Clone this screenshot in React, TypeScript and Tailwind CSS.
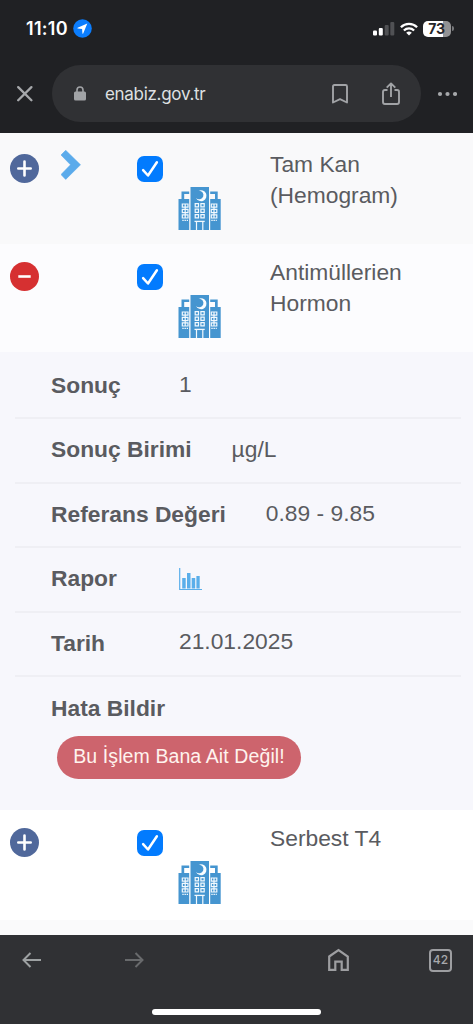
import { clsx } from "clsx";
import type { ReactNode } from "react";

type TestRowProps = {
  name: ReactNode;
  open?: boolean;
  arrow?: boolean;
  className?: string;
};

const details: { label: string; value: ReactNode; className?: string }[] = [
  { label: "Sonuç", value: "1", className: "pb-[2px]" },
  { label: "Sonuç Birimi", value: "µg/L" },
  { label: "Referans Değeri", value: "0.89 - 9.85", className: "pb-px" },
  { label: "Rapor", value: <ChartIcon /> },
  { label: "Tarih", value: "21.01.2025", className: "pb-[3px]" },
];

function ChartIcon() {
  return (
    <svg width="24" height="24" viewBox="0 0 24 24" className="mt-[2px] text-[#5aaeea]">
      <path d="M.7 1v21.500h22.300" fill="none" stroke="currentColor" strokeWidth="1.200" />
      <path d="M3.200 11h3.500v10.500h-3.500zM8 6h3.500v15.500h-3.500zM12.700 11h3.500v10.500h-3.500zM17.400 9h3.300v12.500h-3.300z" fill="currentColor" />
    </svg>
  );
}

function HospitalIcon() {
  return (
    <svg width="43" height="43" viewBox="0 0 43 43" className="-ml-[0.500px]">
      <g fill="#4595d0">
        <path d="M12.500 0h18.500v43h-18.500z" />
        <path d="M.500 12h10.700v31h-10.700zM32.200 12h10.500v31h-10.500z" />
        <path d="M3.500 4.500h7.700v2.400h-5v5.600h-2.700zM32.200 4.500h7.500v8h-2.700v-5.600h-4.800z" />
      </g>
      <path d="M20.500 3.800a5.500 5.500 0 1 1-2.500 7.200 4.300 4.300 0 1 0 2.500-7.200z" fill="#fbfdff" />
      <g fill="none" stroke="#f2f9fe" strokeWidth="1.200">
        <path d="M17.200 16.600h3.300v3.300h-3.300zM22.900 16.600h3.300v3.300h-3.300zM17.200 22.100h3.300v3.300h-3.300zM22.900 22.100h3.300v3.300h-3.300zM17.200 27.600h3.300v3.300h-3.300zM22.900 27.600h3.300v3.300h-3.300z" />
        <path d="M4.300 17h5.700v3.200h-5.700zM4.300 22.400h5.700v3.200h-5.700zM4.300 27.800h5.700v3.200h-5.700zM7.200 17v14M33.300 17h5.500v3.200h-5.500zM33.300 22.400h5.500v3.200h-5.500zM33.300 27.800h5.500v3.200h-5.500zM36 17v14" />
        <path d="M4.300 33.300h5.700M33.300 33.300h5.500" strokeDasharray="1.400 .8" />
        <path d="M16.500 34.400h10.200" strokeWidth="1.300" />
        <path d="M18.500 34.500v8.500M24.800 34.500v8.500" />
      </g>
    </svg>
  );
}

function ToggleIcon({ open }: { open?: boolean }) {
  return (
    <span
      className={clsx(
        "flex size-[29px] shrink-0 items-center justify-center rounded-full",
        open ? "bg-[#d63031]" : "bg-[#50689b]"
      )}
    >
      <svg width="15" height="17" viewBox="0 0 15 17" stroke="#fff" strokeWidth="2.600">
        {open ? (
          <path d="M1.300 8.500h12.400" />
        ) : (
          <path d="M1.300 8.500h12.400M7.500 1.500v14" strokeLinecap="round" />
        )}
      </svg>
    </span>
  );
}

function TestRow({ name, open, arrow, className }: TestRowProps) {
  return (
    <div className={clsx("grid grid-cols-[51px_76px_41px_92px_1fr] pl-[10px]", className)}>
      <div className="pt-[10px]">
        <ToggleIcon open={open} />
      </div>
      <div className="pt-[6px]">
        {arrow && (
          <svg width="20" height="30" viewBox="0 0 20 30" fill="#5babeb">
            <path d="M4.700.300 0 5l9.500 9.800L0 24.600l4.700 4.800L19.500 14.800z" stroke="#5babeb" strokeWidth=".6" strokeLinejoin="round" />
          </svg>
        )}
      </div>
      <div className="pt-3">
        <span className="flex size-[26px] items-center justify-center rounded-[7px] bg-[#027bfe]">
          <svg width="18" height="18" viewBox="0 0 18 18" fill="none" stroke="#fff" strokeWidth="2.500" strokeLinecap="round" strokeLinejoin="round">
            <path d="M2.100 10.200 7 15.500 15.900 2.200" />
          </svg>
        </span>
      </div>
      <div className="pt-[43px]">
        <HospitalIcon />
      </div>
      <div className="pt-[5px] leading-[31px]">{name}</div>
    </div>
  );
}

function StatusBar() {
  return (
    <div className="flex h-[57px] items-center pl-[26px] pr-[19px] text-white">
      <span className="w-[47px] text-[18px] font-semibold tracking-[0.3px]">11:10</span>
      <svg width="19" height="19" viewBox="0 0 19 19">
        <circle cx="9.500" cy="9.500" r="9.300" fill="#0b7dfd" />
        <path d="M14.300 4.500 4.600 8.800q-.7.600.200.800l4.300.300.300 4.300q.300.900.800.200z" fill="#fff" />
      </svg>
      <svg width="22" height="14" viewBox="0 0 22 14" className="ml-auto" fill="#fff">
        <rect x="0" y="8.500" width="4" height="5" rx="1.100" />
        <rect x="5.800" y="6" width="4" height="7.500" rx="1.100" />
        <rect x="11.700" y="3" width="4" height="10.500" rx="1.100" fill="#505154" />
        <rect x="17.300" y="0" width="4" height="13.500" rx="1.100" fill="#505154" />
      </svg>
      <svg width="18" height="14" viewBox="0 0 18 14" className="ml-[5px]" fill="none" stroke="#fff" strokeWidth="2.300">
        <path d="M.9 5.200a11.600 11.600 0 0 1 16.200 0M3.900 8.500a7.400 7.400 0 0 1 10.200 0" />
        <path d="M9 13.500 6.200 10.800a4.100 4.100 0 0 1 5.600 0z" fill="#fff" stroke="none" />
      </svg>
      <div className="ml-[5px] flex h-4 w-7 items-center justify-center rounded-[5px] bg-[linear-gradient(90deg,#fff_73%,#929294_73%)] pr-px text-[14px] font-bold leading-4 tracking-[-0.3px] text-[#25262a]">
        73
      </div>
      <span className="ml-px h-[5px] w-[2px] rounded-r-full bg-[#77787b]" />
    </div>
  );
}

function AddressBar() {
  return (
    <div className="flex h-[76px] items-start pl-[17px] pt-2">
      <svg width="16" height="57" viewBox="0 -20.500 16 57" stroke="#a6a8ab" strokeWidth="2.300" strokeLinecap="round">
        <path d="m1.200 1.600 13.200 13.200M14.400 1.600 1.200 14.800" />
      </svg>
      <div className="ml-[19px] flex h-[57px] w-[369px] items-center rounded-full bg-[#303134] pl-[22px] pr-[21.500px]">
        <svg width="12" height="15" viewBox="0 0 12 15">
          <path d="M3 6.500V4a3 3 0 0 1 6 0v2.500" fill="none" stroke="#a1a3a6" strokeWidth="1.600" />
          <rect y="5.500" width="12" height="9" rx="1.500" fill="#a1a3a6" />
        </svg>
        <span className="ml-[19px] pt-[2px] text-[17px] tracking-[-0.3px] text-[#dfe0e2]">enabiz.gov.tr</span>
        <svg width="16" height="20" viewBox="0 0 16 20" className="ml-auto" fill="none" stroke="#a1a3a6" strokeWidth="1.900">
          <path d="M1 2.400Q1 1 2.400 1h11.200Q15 1 15 2.400v16.100l-7-3.400-7 3.400z" strokeLinejoin="round" />
        </svg>
        <svg width="18" height="24" viewBox="0 0 18 24" className="ml-[33.500px]" fill="none" stroke="#a1a3a6" strokeWidth="1.900">
          <path d="M5.500 8H2.900Q1 8 1 9.900v10.200Q1 22 2.900 22h12.200q1.900 0 1.900-1.900V9.900Q17 8 15.100 8h-2.600M9 15V1.500M4.700 5.700 9 1.400l4.300 4.300" strokeLinejoin="round" />
        </svg>
      </div>
      <svg width="20" height="57" viewBox="0 -26.500 20 57" className="ml-4" fill="#a6a8ab">
        <circle cx="3" cy="2.500" r="2.100" />
        <circle cx="10.500" cy="2.500" r="2.100" />
        <circle cx="18" cy="2.500" r="2.100" />
      </svg>
    </div>
  );
}

function BottomBar() {
  return (
    <footer className="flex h-[89px] flex-col bg-[#303134] font-['Inter',sans-serif]">
      <div className="flex h-[50px] items-center pl-[22px]">
        <svg width="19" height="16" viewBox="0 0 19 16" fill="none" stroke="#9da1a2" strokeWidth="2">
          <path d="M19 8H1.600M8.500 1 1.500 8l7 7" />
        </svg>
        <svg width="19" height="16" viewBox="0 0 19 16" className="ml-[84px]" fill="none" stroke="#686a6c" strokeWidth="2">
          <path d="M0 8h17.400M10.500 1l7 7-7 7" />
        </svg>
        <svg width="21" height="24" viewBox="0 0 21 24" className="ml-[184px]" fill="none" stroke="#9d9ea1" strokeWidth="2.200">
          <path d="M1.200 8.500 10.500 2l9.300 6.500v13.400h-6.100v-8.200H7.300v8.200H1.200z" />
        </svg>
        <span className="ml-20 flex size-[23px] items-center justify-center rounded-[4px] border-2 border-[#9d9ea1] text-[12px] font-medium leading-none text-[#a8a9ac]">
          42
        </span>
      </div>
      <span className="mx-auto mt-6 h-[6px] w-[169px] rounded-full bg-white" />
    </footer>
  );
}

export default function App() {
  return (
    <div className="flex h-[1024px] w-[473px] flex-col overflow-hidden bg-[#fafafb] font-['Liberation_Sans',Arial,sans-serif] text-[22.800px] text-[#5a5b60]">
      <header className="h-[133px] shrink-0 bg-[#202124] font-['Inter',sans-serif]">
        <StatusBar />
        <AddressBar />
      </header>

      <main className="flex-1">
        <TestRow
          className="h-[111px] bg-[#f9f9fa] pt-[11px]"
          arrow
          name={<>Tam Kan<br />(Hemogram)</>}
        />
        <TestRow
          className="h-[108px] bg-[#fcfcfe] pt-2"
          open
          name={<>Antimüllerien<br />Hormon</>}
        />

        <section className="h-[458px] bg-[#f7f7fc] pl-[15px] pr-3 pt-[3px]">
          {details.map((item) => (
            <div
              key={item.label}
              className="flex h-[64.400px] items-center border-b-2 border-[#efeff4] pb-[2px] pl-9"
            >
              <span className="mr-10 min-w-[88px] font-bold">{item.label}</span>
              <span className={item.className}>{item.value}</span>
            </div>
          ))}
          <div className="pl-[35px] pt-4">
            <span className="block pl-px font-bold leading-[31px]">Hata Bildir</span>
            <button className="ml-[7px] mt-3 h-[43px] w-[244px] rounded-full bg-[#cd646d] pb-[2px] text-[19.500px] tracking-[0.1px] text-[#fff3ee]">
              Bu İşlem Bana Ait Değil!
            </button>
          </div>
        </section>

        <TestRow className="h-[110px] bg-white pt-2" name="Serbest T4" />
      </main>

      <BottomBar />
    </div>
  );
}
